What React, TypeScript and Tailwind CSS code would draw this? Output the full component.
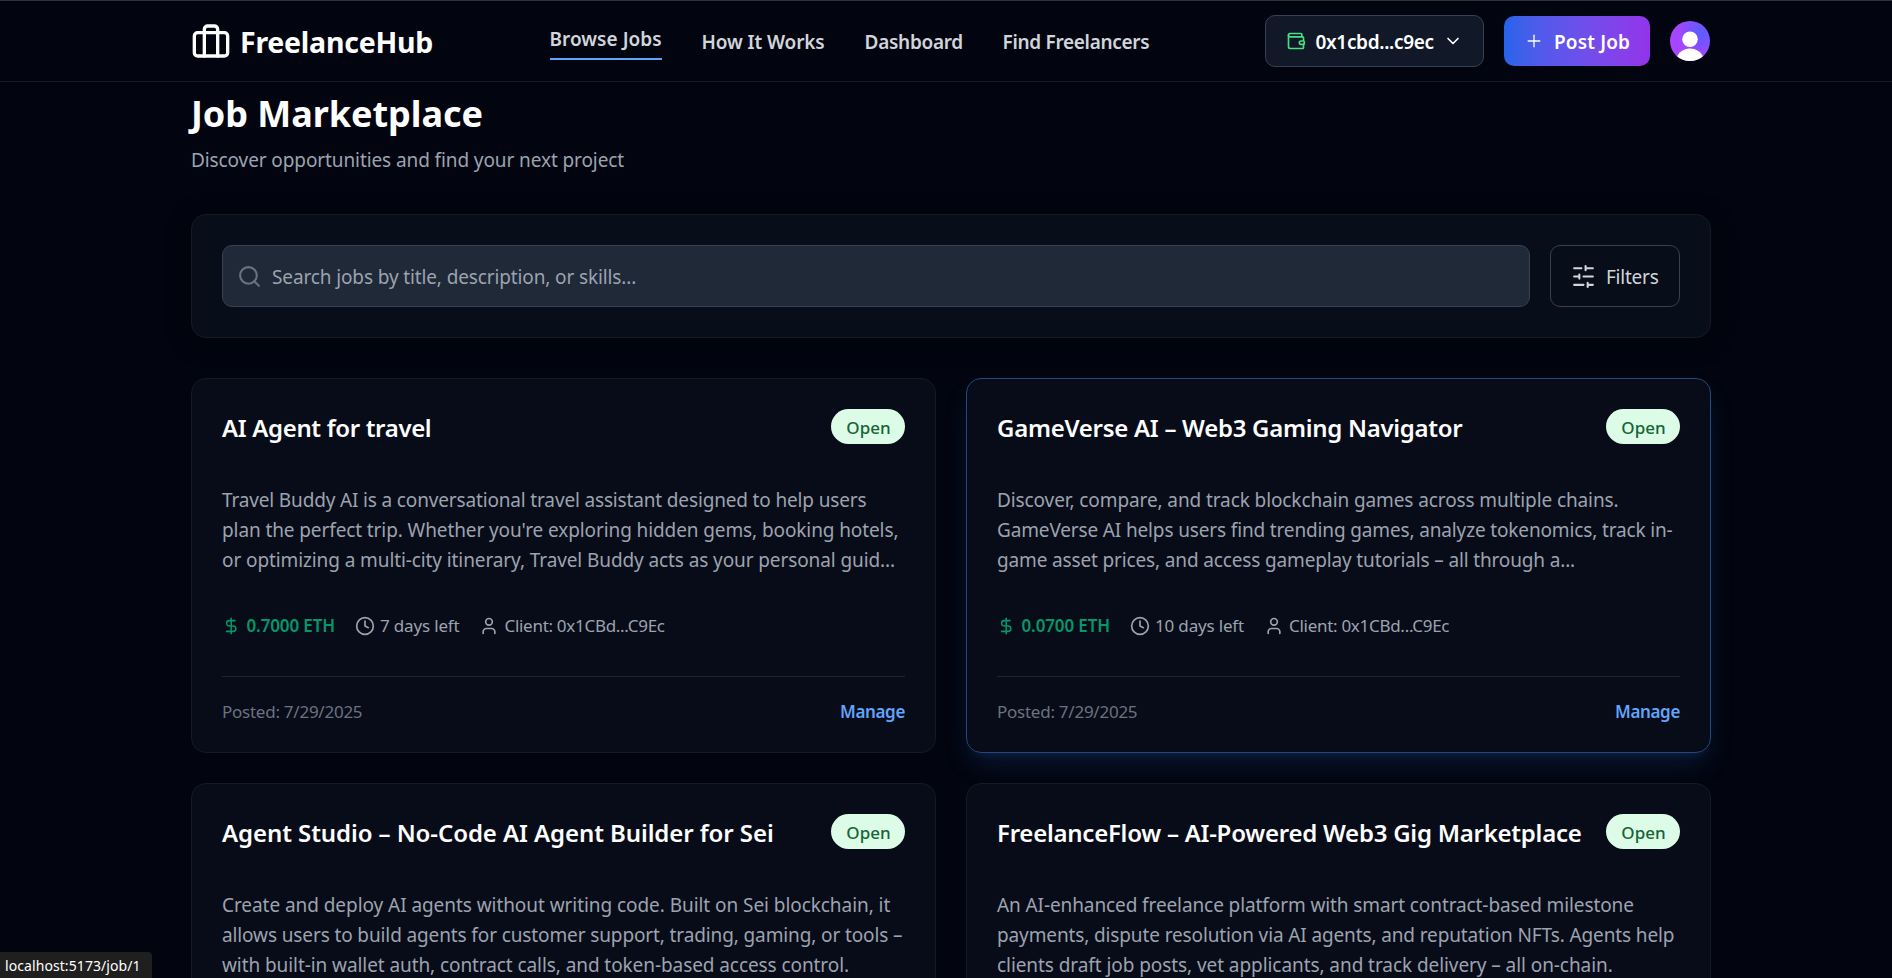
import type { ReactNode } from "react";
import { ChevronDown, Clock, DollarSign, Plus, Search, User, Wallet } from "lucide-react";
import clsx from "clsx";

type Line = { text: string; tracking: string };

type Job = {
  title: Line;
  description: Line[];
  budget?: string;
  timeLeft?: string;
  active?: boolean;
};

const jobs: Job[] = [
  {
    title: { text: "AI Agent for travel", tracking: "tracking-[-0.34px]" },
    description: [
      { text: "Travel Buddy AI is a conversational travel assistant designed to help users", tracking: "tracking-[-0.155px]" },
      { text: "plan the perfect trip. Whether you're exploring hidden gems, booking hotels,", tracking: "tracking-[-0.103px]" },
      { text: "or optimizing a multi-city itinerary, Travel Buddy acts as your personal guid...", tracking: "tracking-[-0.1px]" },
    ],
    budget: "0.7000 ETH",
    timeLeft: "7 days left",
  },
  {
    title: { text: "GameVerse AI – Web3 Gaming Navigator", tracking: "tracking-[-0.28px]" },
    description: [
      { text: "Discover, compare, and track blockchain games across multiple chains.", tracking: "tracking-[-0.1px]" },
      { text: "GameVerse AI helps users find trending games, analyze tokenomics, track in-", tracking: "tracking-[-0.145px]" },
      { text: "game asset prices, and access gameplay tutorials – all through a...", tracking: "tracking-[-0.145px]" },
    ],
    budget: "0.0700 ETH",
    timeLeft: "10 days left",
    active: true,
  },
  {
    title: { text: "Agent Studio – No-Code AI Agent Builder for Sei", tracking: "tracking-[-0.08px]" },
    description: [
      { text: "Create and deploy AI agents without writing code. Built on Sei blockchain, it", tracking: "tracking-[-0.06px]" },
      { text: "allows users to build agents for customer support, trading, gaming, or tools –", tracking: "tracking-[-0.12px]" },
      { text: "with built-in wallet auth, contract calls, and token-based access control.", tracking: "tracking-[-0.08px]" },
    ],
  },
  {
    title: { text: "FreelanceFlow – AI-Powered Web3 Gig Marketplace", tracking: "tracking-[-0.245px]" },
    description: [
      { text: "An AI-enhanced freelance platform with smart contract-based milestone", tracking: "tracking-[-0.1px]" },
      { text: "payments, dispute resolution via AI agents, and reputation NFTs. Agents help", tracking: "tracking-[-0.125px]" },
      { text: "clients draft job posts, vet applicants, and track delivery – all on-chain.", tracking: "tracking-[-0.07px]" },
    ],
  },
];

const navLinks = [
  { label: "How It Works", style: "w-[123px] tracking-[-0.1px]" },
  { label: "Dashboard", style: "w-[98px] tracking-[-0.28px]" },
  { label: "Find Freelancers", style: "w-[147px] tracking-[-0.31px]" },
];

function BriefcaseIcon() {
  return (
    <svg className="size-10" viewBox="0 0 24 24" fill="none" stroke="currentColor" strokeWidth="2" strokeLinecap="round" strokeLinejoin="round">
      <rect x="2" y="7" width="20" height="14" rx="2" />
      <path d="M16 21V5a2 2 0 0 0-2-2h-4a2 2 0 0 0-2 2v16" />
    </svg>
  );
}

function SlidersIcon() {
  return (
    <svg className="size-[25px] shrink-0" viewBox="0 0 24 24" fill="none" stroke="currentColor" strokeWidth="2" strokeLinecap="round">
      <path d="M21 4h-7M10 4H3M21 12h-9M8 12H3M21 20h-5M12 20H3M14 2v4M8 10v4M16 18v4" />
    </svg>
  );
}

function Avatar() {
  return (
    <div className="size-10 shrink-0 overflow-hidden rounded-full bg-[radial-gradient(circle_at_78%_28%,#5b5cff_0%,#7a52ff_28%,#a846ff_58%)]">
      <svg className="size-10 fill-white" viewBox="0 0 40 40">
        <circle cx="20" cy="18.3" r="7.8" />
        <ellipse cx="20" cy="40.5" rx="14" ry="13" />
      </svg>
    </div>
  );
}

function Header() {
  return (
    <header className="h-[82px] border-t border-b border-t-[#2f3236] border-b-[#141924] bg-[#02050f] pl-[191px]">
      <div className="flex h-20 w-[1519px] items-center justify-between">
        <div className="flex items-center gap-[9px] pb-px text-white">
          <BriefcaseIcon />
          <span className="w-[194px] pt-[3px] text-[28.5px] leading-9 font-bold tracking-[-0.25px] whitespace-nowrap">FreelanceHub</span>
        </div>
        <nav className="flex items-center gap-10 text-[19px] leading-[30px] font-semibold whitespace-nowrap text-[#d1d5db]">
          <a className="w-[112px] border-b-2 border-[#60a5fa] pt-px pb-1 tracking-[0.03px]">Browse Jobs</a>
          {navLinks.map((link) => (
            <a key={link.label} className={clsx("pt-px", link.style)}>{link.label}</a>
          ))}
        </nav>
        <div className="flex items-center gap-5 text-[19px] font-semibold whitespace-nowrap text-white">
          <button className="flex h-[52px] w-[219px] items-center justify-between rounded-[10px] border border-[#374151] bg-[#111827] px-5">
            <Wallet className="size-5 text-[#4ade80]" />
            <span className="w-[118px] pt-0.5 tracking-[-0.33px]">0x1cbd...c9ec</span>
            <ChevronDown className="size-5" />
          </button>
          <button className="flex h-[50px] w-[146px] items-center gap-2.5 rounded-[10px] bg-linear-to-r from-[#2563eb] to-[#9333ea] px-5">
            <Plus className="size-5 shrink-0" strokeWidth={1.6} />
            <span className="pt-0.5 tracking-[0.15px]">Post Job</span>
          </button>
          <Avatar />
        </div>
      </div>
    </header>
  );
}

function SearchPanel() {
  return (
    <section className="mt-[39px] flex h-31 items-center gap-5 rounded-[15px] border border-[#151a26] bg-[#080d1a] px-[30px] shadow-[0_4px_24px_rgba(0,0,0,0.35)]">
      <div className="flex h-[62px] flex-1 items-center gap-2.5 rounded-[10px] border border-[#374151] bg-[#1f2937] px-[14px]">
        <Search className="size-[25px] text-[#6b7280]" />
        <span className="pt-0.5 text-[19px] tracking-[-0.125px] text-[#9ca3af]">Search jobs by title, description, or skills...</span>
      </div>
      <button className="flex h-[62px] w-[130px] items-center gap-2.5 rounded-[10px] border border-[#374151] px-5 text-[19px] text-[#d1d5db]">
        <SlidersIcon />
        <span className="pt-0.5 tracking-[-0.243px]">Filters</span>
      </button>
    </section>
  );
}

function Meta({ icon, children, className }: { icon: ReactNode; children: string; className: string }) {
  return (
    <div className={clsx("flex items-center whitespace-nowrap", className)}>
      {icon}
      <span className="pt-px">{children}</span>
    </div>
  );
}

function JobCard({ job }: { job: Job }) {
  return (
    <article
      className={clsx(
        "h-[375px] rounded-[15px] border bg-[#111827]/42 p-[30px]",
        job.active
          ? "border-[#244782] shadow-[0_14px_28px_-5px_rgba(59,130,246,0.17),0_8px_10px_-6px_rgba(59,130,246,0.12)]"
          : "border-[#151a26]",
      )}
    >
      <div className="flex h-[35px] items-center justify-between">
        <h3 className={clsx("pt-[3px] text-2xl font-semibold whitespace-nowrap text-white", job.title.tracking)}>{job.title.text}</h3>
        <span className="flex h-[35px] w-[74px] items-center justify-center rounded-full bg-[#dcfce7] pt-0.5 pl-px text-[17px] font-medium text-[#166534]">Open</span>
      </div>
      <div className="mt-[41px] text-[19px] leading-[30px] whitespace-nowrap text-[#9ca3af]">
        {job.description.map((line) => (
          <p key={line.text} className={line.tracking}>{line.text}</p>
        ))}
      </div>
      {job.budget && job.timeLeft && (
        <>
          <div className="mt-[38px] flex h-[25px] items-center gap-5 text-[17px] text-[#9ca3af]">
            <Meta icon={<DollarSign className="size-5" />} className="w-[113px] gap-1.5 font-semibold tracking-[-0.12px] text-[#059669]">{job.budget}</Meta>
            <Meta icon={<Clock className="size-5" />} className="gap-[5px] tracking-[-0.17px]">{job.timeLeft}</Meta>
            <Meta icon={<User className="size-5" />} className="gap-[5px] tracking-[-0.29px]">Client: 0x1CBd...C9Ec</Meta>
          </div>
          <div className="mt-[38px] flex items-center justify-between border-t border-[#1f2532] pt-[22px] text-[17px] leading-[25px]">
            <span className="tracking-[-0.25px] text-[#6b7280]">Posted: 7/29/2025</span>
            <a className="font-semibold tracking-[-0.35px] text-[#60a5fa]">Manage</a>
          </div>
        </>
      )}
    </article>
  );
}

export default function App() {
  return (
    <div className="h-[978px] w-full overflow-hidden bg-[#02050f] font-['Noto_Sans','Open_Sans',sans-serif]">
      <Header />
      <main className="ml-[191px] w-[1520px] pt-[7px]">
        <h1 className="h-[45px] pt-0.5 text-[36px] leading-[45px] font-bold tracking-[-0.05px] text-white">Job Marketplace</h1>
        <p className="mt-[11px] text-[19px] leading-[30px] tracking-[-0.1px] text-[#9ca3af]">Discover opportunities and find your next project</p>
        <SearchPanel />
        <div className="mt-10 grid grid-cols-[745px_745px] gap-[30px]">
          {jobs.map((job) => (
            <JobCard key={job.title.text} job={job} />
          ))}
        </div>
      </main>
      <div className="fixed bottom-0 left-0 flex h-[26px] w-[152px] items-center rounded-tr-[4px] bg-[#1f1f1f] pt-0.5 pl-[5px] text-sm tracking-[0.08px] text-white">localhost:5173/job/1</div>
    </div>
  );
}
